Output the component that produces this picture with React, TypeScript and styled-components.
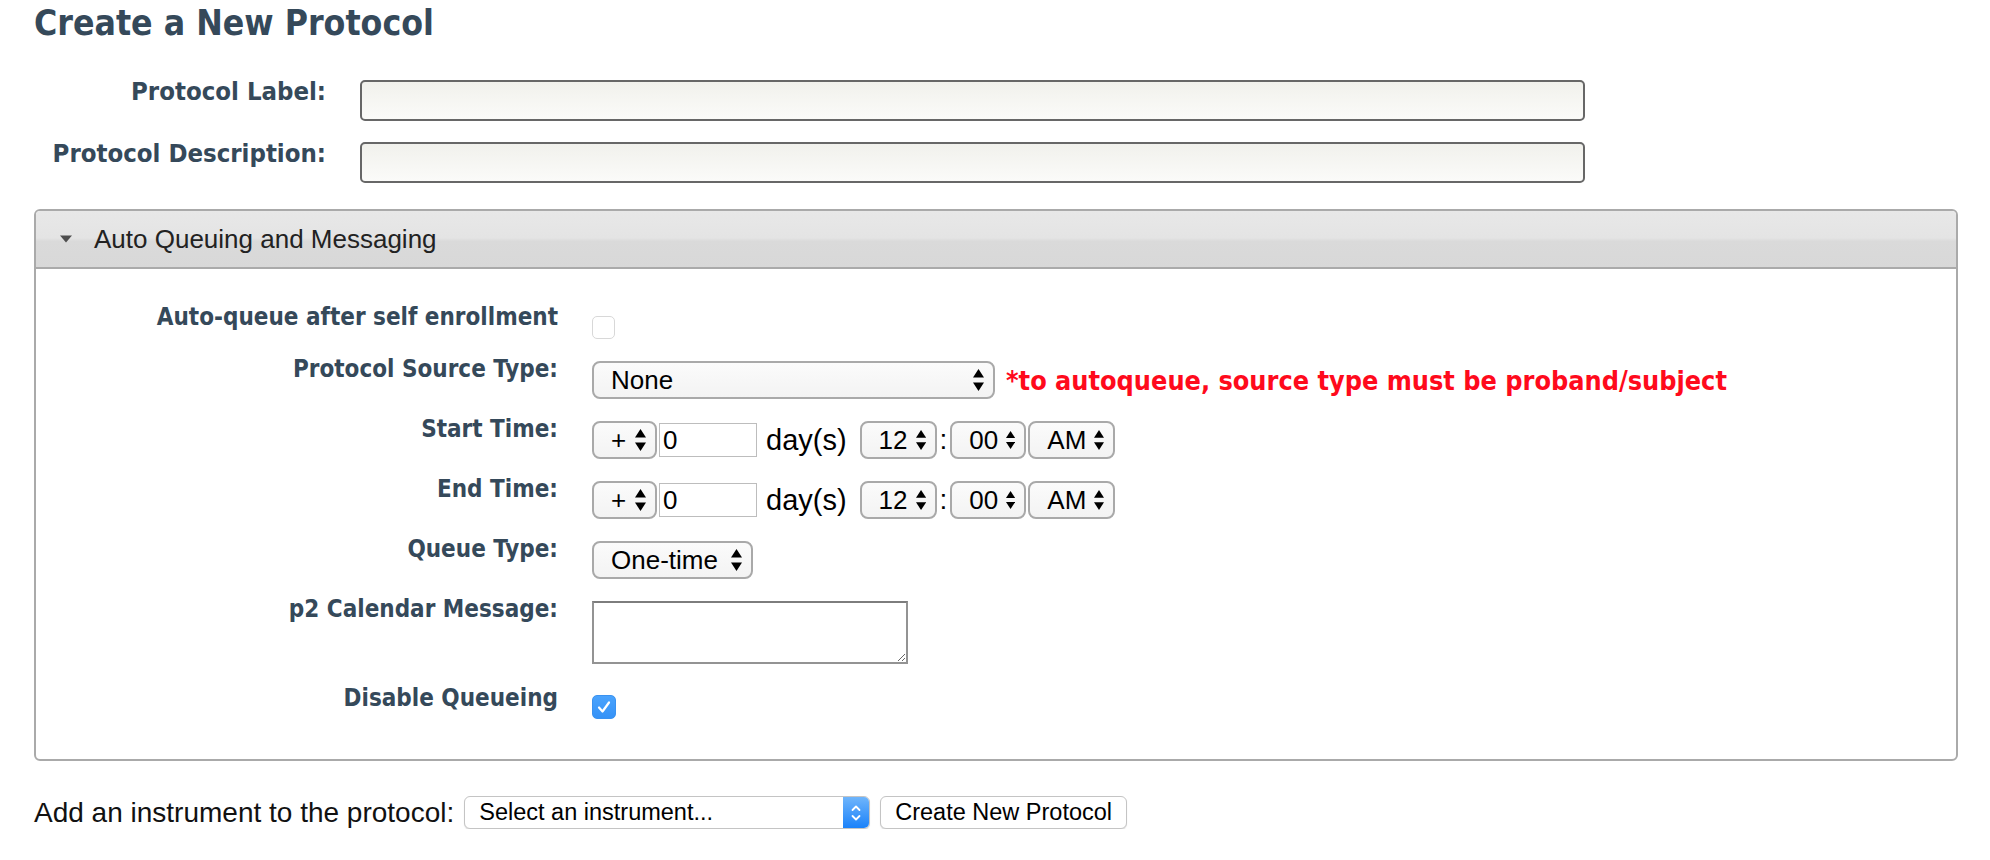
import React from 'react';
import styled, { createGlobalStyle } from 'styled-components';

const GlobalStyle = createGlobalStyle`
  html, body {
    margin: 0;
    padding: 0;
    background: #ffffff;
  }
  body {
    font-family: "Liberation Sans", Arial, sans-serif;
    color: #000;
  }
`;

const headingFont = `"DejaVu Sans Condensed", "DejaVu Sans", Verdana, sans-serif`;
const uiFont = `"Liberation Sans", Arial, Helvetica, sans-serif`;

const Page = styled.div`
  box-sizing: border-box;
  width: 1990px;
  padding: 3px 32px 0 34px;
`;

const Title = styled.h1`
  margin: 0;
  font-family: ${headingFont};
  font-stretch: condensed;
  font-weight: bold;
  font-size: 35.3px;
  line-height: 40px;
  color: #35495a;
`;

const TopForm = styled.div`
  display: grid;
  grid-template-columns: 292px 1225px;
  column-gap: 34px;
  row-gap: 18px;
  margin-top: 34px;
  align-items: start;
`;

const FieldLabel = styled.label<{ $size?: number }>`
  display: block;
  font-family: ${headingFont};
  font-stretch: condensed;
  font-weight: bold;
  font-size: ${(p) => p.$size ?? 24}px;
  line-height: 29px;
  color: #35495a;
  text-align: right;
  white-space: nowrap;
`;

const LongInput = styled.input`
  box-sizing: border-box;
  display: block;
  width: 1225px;
  height: 41px;
  margin: 3px 0 0;
  padding: 0 8px;
  border: 2px solid #676767;
  border-radius: 5px;
  background: linear-gradient(#f1f1ec, #fbfbf9);
  font: 26px ${uiFont};
  outline: none;
`;

const Panel = styled.section`
  margin-top: 26px;
  border: 2px solid #aaaaaa;
  border-radius: 6px;
  overflow: hidden;
`;

const PanelHeader = styled.div`
  display: flex;
  align-items: center;
  gap: 22px;
  height: 56px;
  padding-left: 24px;
  border-bottom: 2px solid #aaaaaa;
  background: linear-gradient(
    to bottom,
    #e8e8e8 0%,
    #e4e4e4 48%,
    #dadada 54%,
    #d8d8d8 100%
  );
  font: 26px ${uiFont};
  color: #222;
`;

const PanelBody = styled.div`
  display: grid;
  grid-template-columns: 522px 1fr;
  column-gap: 34px;
  row-gap: 16px;
  align-items: start;
  padding: 34px 0 40px;
`;

const ControlCell = styled.div<{ $top?: number; $bottom?: number }>`
  display: flex;
  align-items: center;
  margin-top: ${(p) => p.$top ?? 6}px;
  margin-bottom: ${(p) => p.$bottom ?? 0}px;
`;

const CheckBox = styled.span<{ $checked?: boolean }>`
  box-sizing: border-box;
  display: inline-flex;
  align-items: center;
  justify-content: center;
  width: ${(p) => (p.$checked ? 24 : 23)}px;
  height: ${(p) => (p.$checked ? 24 : 23)}px;
  border-radius: 5px;
  border: 1px solid ${(p) => (p.$checked ? '#3a92f0' : '#d8d8d8')};
  background: ${(p) => (p.$checked ? 'linear-gradient(#4aa3fd, #3592f7)' : '#ffffff')};
`;

const SelectBox = styled.div<{ $width?: number }>`
  box-sizing: border-box;
  display: inline-flex;
  align-items: center;
  justify-content: space-between;
  gap: 8px;
  height: 38px;
  ${(p) => (p.$width ? `width: ${p.$width}px;` : '')}
  padding: 0 9px 0 17px;
  border: 2px solid #a9a9a9;
  border-radius: 8px;
  background: linear-gradient(#fbfbfb, #f3f3f3);
  font: 26px ${uiFont};
  line-height: 1;
  color: #000;
  white-space: nowrap;
`;

const Note = styled.span`
  margin-left: 11px;
  font-family: ${headingFont};
  font-stretch: condensed;
  font-weight: bold;
  font-size: 26.8px;
  color: #ff0a1c;
  white-space: nowrap;
`;

const DayInput = styled.input`
  box-sizing: border-box;
  width: 98px;
  height: 34px;
  margin: 0 0 0 2px;
  padding: 0 3px;
  border: 1px solid #bdbdbd;
  background: #fff;
  font: 26px ${uiFont};
  color: #000;
  outline: none;
`;

const Unit = styled.span`
  margin: 0 13px 0 9px;
  font: 29px ${uiFont};
  color: #000;
`;

const Colon = styled.span`
  margin: 0 3px;
  font: 28px ${uiFont};
  color: #000;
`;

const Spaced = styled.span`
  margin-left: 2px;
  display: inline-flex;
`;

const MessageArea = styled.textarea`
  box-sizing: border-box;
  display: block;
  width: 316px;
  height: 63px;
  margin: 0;
  padding: 4px;
  border: 2px solid #939393;
  border-top-color: #7d7d7d;
  background: #fff;
  font: 24px ${uiFont};
  resize: both;
  outline: none;
`;

const Footer = styled.div`
  display: flex;
  align-items: center;
  gap: 10px;
  margin-top: 35px;
`;

const FooterText = styled.span`
  font: 28px ${uiFont};
  color: #111;
`;

const MenuSelect = styled.div`
  box-sizing: border-box;
  display: flex;
  align-items: stretch;
  width: 406px;
  height: 33px;
  border: 1px solid #c4c4c4;
  border-radius: 6px;
  background: #fff;
  box-shadow: 0 1px 1px rgba(0, 0, 0, 0.12);
  overflow: hidden;
`;

const MenuText = styled.span`
  flex: 1;
  display: flex;
  align-items: center;
  padding-left: 14px;
  font: 23.5px ${uiFont};
  color: #000;
`;

const MenuCap = styled.span`
  display: flex;
  align-items: center;
  justify-content: center;
  width: 26px;
  background: linear-gradient(#6fb5fb, #1b82fa);
`;

const PushButton = styled.button`
  box-sizing: border-box;
  height: 33px;
  padding: 0 14px;
  border: 1px solid #c4c4c4;
  border-radius: 6px;
  background: #fff;
  box-shadow: 0 1px 1px rgba(0, 0, 0, 0.12);
  font: 23.5px ${uiFont};
  color: #000;
  cursor: pointer;
`;

const UpDown = () => (
  <svg width="11" height="22" viewBox="0 0 11 22" aria-hidden="true">
    <polygon points="5.5,0 11,8.5 0,8.5" fill="#000" />
    <polygon points="0,13.5 11,13.5 5.5,22" fill="#000" />
  </svg>
);

const Disclosure = () => (
  <svg width="12" height="8" viewBox="0 0 12 8" aria-hidden="true">
    <polygon points="0,0.5 12,0.5 6,7.5" fill="#4e4e4e" />
  </svg>
);

const Tick = () => (
  <svg width="16" height="16" viewBox="0 0 16 16" aria-hidden="true">
    <path d="M3 8.5 L6.5 12.5 L13 3.5" fill="none" stroke="#fff" strokeWidth="2.2" strokeLinecap="round" strokeLinejoin="round" />
  </svg>
);

const Chevrons = () => (
  <svg width="12" height="20" viewBox="0 0 12 20" aria-hidden="true">
    <path d="M2.5 7 L6 3.5 L9.5 7" fill="none" stroke="#fff" strokeWidth="1.8" strokeLinecap="round" strokeLinejoin="round" />
    <path d="M2.5 13 L6 16.5 L9.5 13" fill="none" stroke="#fff" strokeWidth="1.8" strokeLinecap="round" strokeLinejoin="round" />
  </svg>
);

const Select: React.FC<{ value: string; width?: number }> = ({ value, width }) => (
  <SelectBox $width={width} role="combobox" aria-label={value}>
    <span>{value}</span>
    <UpDown />
  </SelectBox>
);

const TimePicker = () => (
  <ControlCell>
    <Select value="+" width={65} />
    <DayInput defaultValue="0" />
    <Unit>day(s)</Unit>
    <Select value="12" width={77} />
    <Colon>:</Colon>
    <Select value="00" width={76} />
    <Spaced>
      <Select value="AM" width={87} />
    </Spaced>
  </ControlCell>
);

export default function App() {
  return (
    <>
      <GlobalStyle />
      <Page>
        <Title>Create a New Protocol</Title>

        <TopForm>
          <FieldLabel $size={25.5} htmlFor="protocol-label">Protocol Label:</FieldLabel>
          <LongInput id="protocol-label" type="text" />
          <FieldLabel $size={25.5} htmlFor="protocol-description">Protocol Description:</FieldLabel>
          <LongInput id="protocol-description" type="text" />
        </TopForm>

        <Panel>
          <PanelHeader>
            <Disclosure />
            <span>Auto Queuing and Messaging</span>
          </PanelHeader>
          <PanelBody>
            <FieldLabel>Auto-queue after self enrollment</FieldLabel>
            <ControlCell $top={13}>
              <CheckBox />
            </ControlCell>

            <FieldLabel>Protocol Source Type:</FieldLabel>
            <ControlCell>
              <Select value="None" width={403} />
              <Note>*to autoqueue, source type must be proband/subject</Note>
            </ControlCell>

            <FieldLabel>Start Time:</FieldLabel>
            <TimePicker />

            <FieldLabel>End Time:</FieldLabel>
            <TimePicker />

            <FieldLabel>Queue Type:</FieldLabel>
            <ControlCell>
              <Select value="One-time" width={161} />
            </ControlCell>

            <FieldLabel>p2 Calendar Message:</FieldLabel>
            <ControlCell $top={6} $bottom={4}>
              <MessageArea />
            </ControlCell>

            <FieldLabel>Disable Queueing</FieldLabel>
            <ControlCell $top={11}>
              <CheckBox $checked>
                <Tick />
              </CheckBox>
            </ControlCell>
          </PanelBody>
        </Panel>

        <Footer>
          <FooterText>Add an instrument to the protocol:</FooterText>
          <MenuSelect role="combobox" aria-label="Select an instrument">
            <MenuText>Select an instrument...</MenuText>
            <MenuCap>
              <Chevrons />
            </MenuCap>
          </MenuSelect>
          <PushButton type="button">Create New Protocol</PushButton>
        </Footer>
      </Page>
    </>
  );
}
